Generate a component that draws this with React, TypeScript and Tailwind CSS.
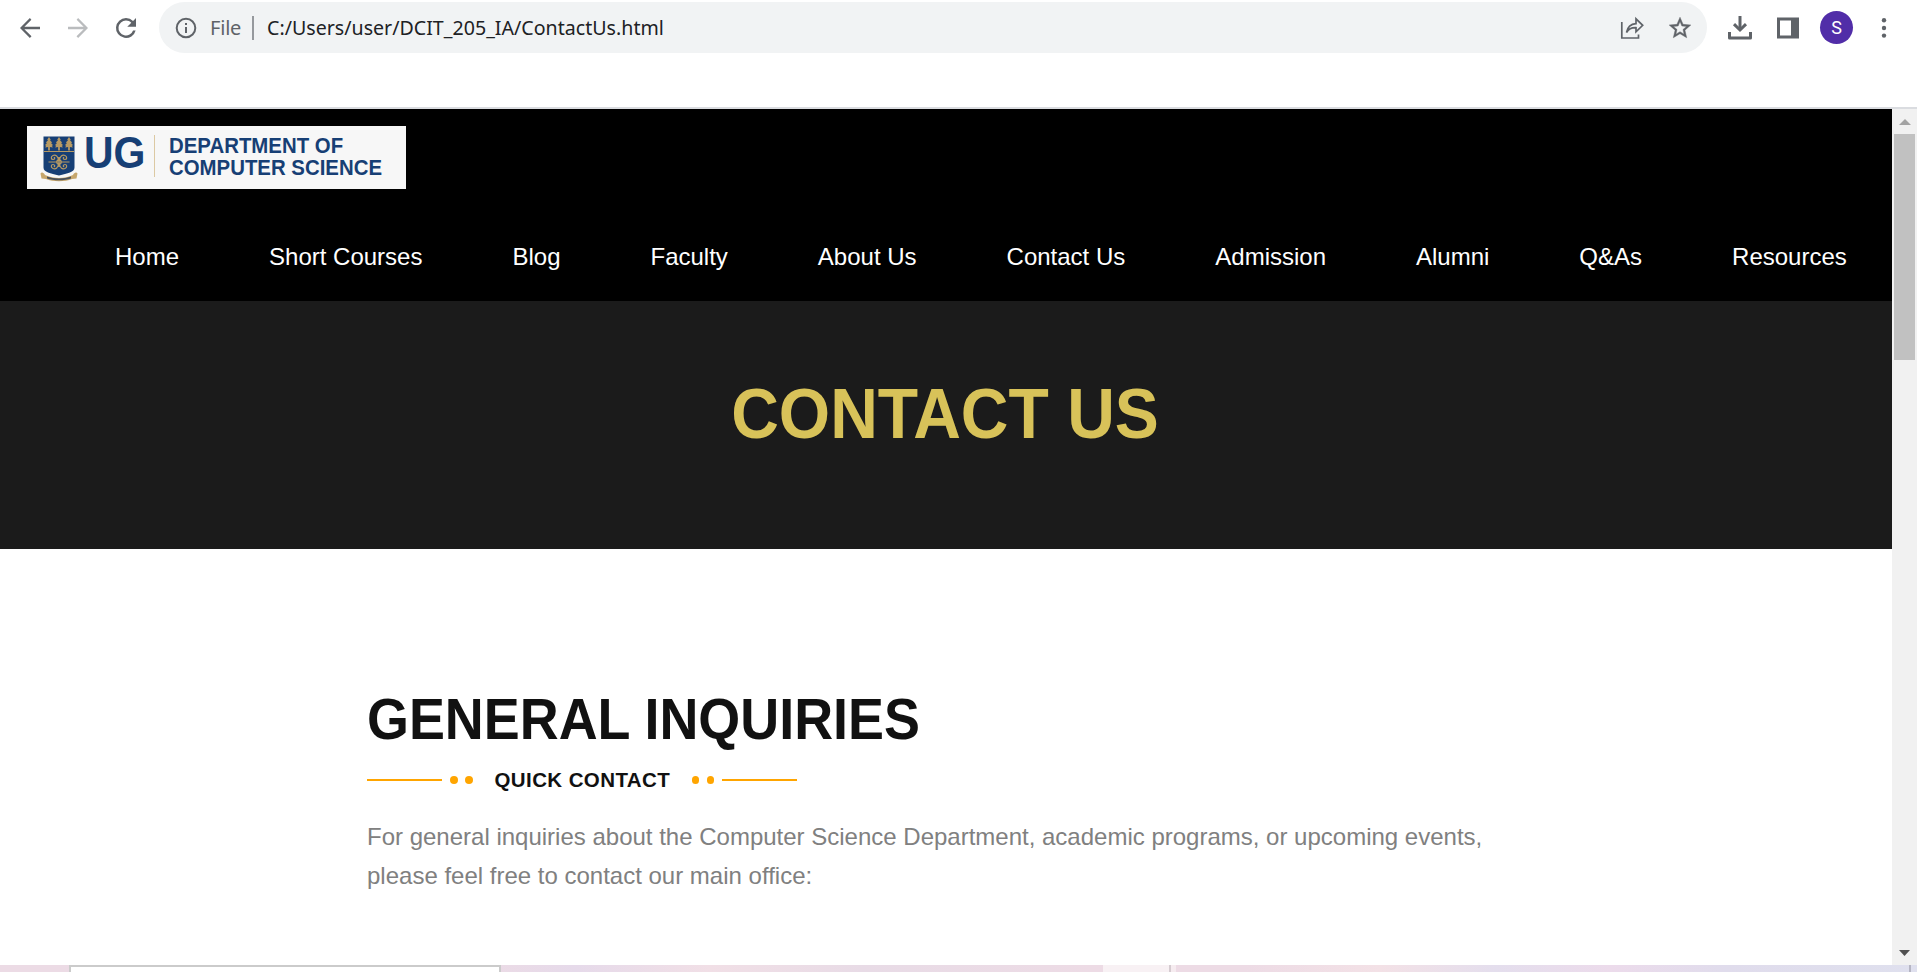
import React from "react";

const nav = ["Home", "Short Courses", "Blog", "Faculty", "About Us", "Contact Us", "Admission", "Alumni", "Q&As", "Resources"];

function Toolbar() {
  return (
    <div className="h-[107px] bg-white pt-[2px]">
      <div className="flex h-[51px] items-center">
        <svg className="ml-[15px] h-[30px] w-[30px] shrink-0" viewBox="0 0 24 24" fill="#5f6368"><path d="M20 11H7.5l5.6-5.6L11.9 4 4 12l7.9 8 1.3-1.4L7.5 13H20z" /></svg>
        <svg className="ml-[18px] h-[30px] w-[30px] shrink-0" viewBox="0 0 24 24" fill="#babcbe"><path d="M4 11h12.5l-5.6-5.6L12.1 4 20 12l-7.9 8-1.3-1.4 5.7-5.6H4z" /></svg>
        <svg className="ml-[18px] h-[30px] w-[30px] shrink-0" viewBox="0 0 24 24" fill="#5f6368"><path d="M17.65 6.35A7.95 7.95 0 0 0 12 4a8 8 0 1 0 7.73 10h-2.08A6 6 0 1 1 12 6c1.66 0 3.14.69 4.22 1.78L13 11h7V4z" /></svg>
        <div className="ml-[18px] flex h-[51px] w-[1548px] shrink-0 items-center rounded-full bg-[#f1f3f4]">
          <svg className="ml-[16px] h-[22px] w-[22px]" viewBox="0 0 22 22" fill="none" stroke="#5f6368" strokeWidth="2"><circle cx="11" cy="11" r="9.3" /><path d="M11 10v6M11 6v2" /></svg>
          <span className="ml-[13px] w-[31px] whitespace-nowrap font-['Noto_Sans',sans-serif] text-[20px] leading-none tracking-[-0.2px] text-[#5f6368]">File</span>
          <span className="ml-[11px] h-6 w-[2px] bg-[#96999d]" />
          <span className="ml-[13px] whitespace-nowrap font-['Noto_Sans',sans-serif] text-[19.6px] leading-none tracking-[0.01px] text-[#202124]">C:/Users/user/DCIT_205_IA/ContactUs.html</span>
          <svg className="ml-auto h-[26px] w-[26px]" viewBox="0 0 26 26" fill="none" stroke="#5f6368" strokeWidth="1.7"><path d="M2.8 7V23H19.5V19.5M7.5 17.5C8.5 11.8 11 9.1 17 8.6V3.8L23.7 10.3 17 16.8V12.7C12.7 12.5 9.8 13.6 7.5 17.5Z" /></svg>
          <svg className="ml-[22px] mr-[14px] h-[26px] w-[26px]" viewBox="0 0 24 24" fill="#5f6368" stroke="#5f6368" strokeWidth="0.4"><path d="m22 9.24-7.19-.62L12 2 9.19 8.63 2 9.24l5.46 4.73L5.82 21 12 17.27 18.18 21l-1.63-7.03zM12 15.4l-3.76 2.27 1-4.28-3.32-2.88 4.38-.38L12 6.1l1.71 4.04 4.38.38-3.32 2.88 1 4.28z" /></svg>
        </div>
        <svg className="ml-[20px] h-[26px] w-[26px] shrink-0" viewBox="0 0 26 26" fill="none" stroke="#5f6368" strokeWidth="3" strokeLinejoin="round"><path d="M13 1v14" /><path strokeLinejoin="miter" d="M7 9.2 13 15l6-5.8" /><path d="M2.5 17v6h21v-6" /></svg>
        <svg className="ml-[24px] h-[22px] w-[22px] shrink-0" viewBox="0 0 22 22" fill="#5f6368"><path fillRule="evenodd" d="M0 .5h22v21H0zM3 3.5v15h11v-15z" /></svg>
        <div className="ml-[21px] flex h-[33px] w-[33px] shrink-0 items-center justify-center rounded-full bg-[#512da8] font-['Roboto',sans-serif] text-[18px] leading-none text-white">S</div>
        <svg className="ml-[28px] h-[22px] w-[6px] shrink-0" viewBox="0 0 6 22" fill="#5f6368"><circle cx="3" cy="3.2" r="2.2" /><circle cx="3" cy="11" r="2.2" /><circle cx="3" cy="18.6" r="2.2" /></svg>
      </div>
    </div>
  );
}

function Tree({ x }: { x: number }) {
  return <path transform={`translate(${x} 3)`} d="M0-1 1.8 1.8 1 2.2 3.2 4.4 2 5 4.2 7.2 2.8 7.6 3.8 9.6.9 9v3.4H-.9V9L-3.8 9.6-2.8 7.6-4.2 7.2-2 5-3.2 4.4-1 2.2-1.8 1.8z" />;
}

function Crest() {
  return (
    <svg className="h-[47px] w-[38px] shrink-0" viewBox="0 0 38 47">
      <path d="M3.5 1.5h31v31c0 5-7 5.500-15.500 8-8.500-2.500-15.500-3-15.500-8z" fill="#173f75" />
      <g fill="#b79a63"><Tree x={9} /><Tree x={19} /><Tree x={29} /><path d="M4 16h30v1H4z" /></g>
      <g fill="none" stroke="#b79a63" strokeWidth="1.2">
        <path d="M8.500 27h21M19 22v10M18.500 26c0-5-3-6.500-5.500-5.500s-2 4 0 4 2.200-2.200.8-2.200M19.500 26c0-5 3-6.500 5.500-5.500s2 4 0 4-2.200-2.200-.8-2.200M18.500 28c0 5-3 6.500-5.500 5.500s-2-4 0-4 2.200 2.200.8 2.200M19.500 28c0 5 3 6.500 5.500 5.500s2-4 0-4-2.200 2.200-.8 2.200" />
        <circle cx="19" cy="27" r="2.2" />
      </g>
      <path d="M.5 38.500c1-2 3.500-1 4.500 1.500 8 4 20 4 28 0 1-2.500 3.500-3.500 4.500-1.500l-1 5-4.500.5c-7 3-19 3-26 0L1.500 43.500z" fill="#c6a66c" />
      <path d="M7 41.500c7 2.500 17 2.500 24 0v2c-7 2.400-17 2.400-24 0z" fill="#4a5058" />
    </svg>
  );
}

function Logo() {
  return (
    <div className="ml-[27px] flex h-[63px] w-[379px] items-start bg-[#f7f7f7] pl-[13px] pt-[9px] font-['Liberation_Sans',Arial,sans-serif] font-bold text-[#173f75]">
      <Crest />
      <span className="ml-[6px] w-[62px] shrink-0 origin-left scale-x-[0.91] whitespace-nowrap text-[45px] leading-[36px]">UG</span>
      <span className="ml-[8px] h-[42px] w-px shrink-0 bg-[#dcc9a3]" />
      <span className="ml-[14px] flex flex-col text-[22px] leading-[22px]">
        <span className="w-[190px] origin-left scale-x-[0.927] whitespace-nowrap">DEPARTMENT OF</span>
        <span className="w-[190px] origin-left scale-x-[0.927] whitespace-nowrap">COMPUTER SCIENCE</span>
      </span>
    </div>
  );
}

function Dots() {
  return <span className="flex gap-[7.5px]"><i className="h-2 w-[7.5px] rounded-full bg-[#ffa500]" /><i className="h-2 w-[7.5px] rounded-full bg-[#ffa500]" /></span>;
}

function Scrollbar() {
  return (
    <div className="flex w-[25px] flex-col items-center bg-[#f1f1f1]">
      <svg className="mt-[9px] h-[7px] w-3" viewBox="0 0 12 7"><path d="M0 7 6 1l6 6z" fill="#a3a3a3" /></svg>
      <div className="mt-[9px] h-[226px] w-[21px] bg-[#c1c1c1]" />
      <svg className="mb-[9px] mt-auto h-[6px] w-[11px]" viewBox="0 0 11 6"><path d="M0 0h11L5.5 6z" fill="#505050" /></svg>
    </div>
  );
}

function DesktopStrip() {
  return (
    <div className="flex h-[7px] bg-[linear-gradient(90deg,#ecdbe5_0%,#ecdbe5_25%,#e6daea_30%,#f1dfe6_37%,#e8dbe6_45%,#eddbe5_57%,#eddbe5_65%,#f3e1e6_72%,#e4deed_78%,#ecdbeb_84%,#e0dcec_90%,#dfe0ee_100%)]">
      <div className="ml-[69px] h-[7px] w-[432px] border-x-2 border-t-2 border-[#cbcbcb] bg-white" />
      <div className="ml-[602px] h-[7px] w-[66px] bg-[#f8f1f4]" />
      <div className="h-[7px] w-[2px] bg-[#d5cbd0]" />
      <div className="h-[7px] w-[5px] bg-[#f6ecf0]" />
      <div className="ml-auto mr-[6px] h-[7px] w-[2px] bg-[#b5b5c3]" />
    </div>
  );
}

export default function App() {
  return (
    <div className="flex h-[972px] w-[1917px] flex-col overflow-hidden bg-white font-['Liberation_Sans',Arial,sans-serif]">
      <Toolbar />
      <div className="h-[2px] bg-[#dadce0]" />
      <div className="flex h-[856px]">
        <div className="w-[1892px] bg-white">
          <header className="h-[192px] bg-black pt-[17px]">
            <Logo />
            <nav className="ml-[115px] mt-[54px] flex gap-[90px] text-2xl leading-[28px] text-white">
              {nav.map((n) => <a key={n} className="whitespace-nowrap">{n}</a>)}
            </nav>
          </header>
          <section className="flex h-[248px] items-start justify-center bg-[#1b1b1b] pr-[2px] pt-[75px]">
            <h1 className="scale-y-[1.06] text-[66px] font-bold leading-[77px] text-[#d8c259]">CONTACT US</h1>
          </section>
          <main className="pl-[367px] pt-[139px]">
            <h2 className="w-[560px] origin-center scale-y-[1.05] whitespace-nowrap text-[53.9px] font-bold leading-[62px] text-[#111]">GENERAL INQUIRIES</h2>
            <div className="mt-[17px] flex h-[26px] items-center">
              <span className="h-[2px] w-[75px] bg-[#ffa500]" />
              <span className="ml-2"><Dots /></span>
              <span className="ml-[22px] w-[176px] whitespace-nowrap text-[20.5px] font-bold leading-none tracking-[0.4px] text-[#111]">QUICK CONTACT</span>
              <span className="ml-[21px]"><Dots /></span>
              <span className="ml-2 h-[2px] w-[75px] bg-[#ffa500]" />
            </div>
            <p className="mt-[24px] w-[1150px] text-2xl leading-[39px] text-[#808080]">
              <span className="block whitespace-nowrap">For general inquiries about the Computer Science Department, academic programs, or upcoming events,</span>
              <span className="block">please feel free to contact our main office:</span>
            </p>
          </main>
        </div>
        <Scrollbar />
      </div>
      <DesktopStrip />
    </div>
  );
}
